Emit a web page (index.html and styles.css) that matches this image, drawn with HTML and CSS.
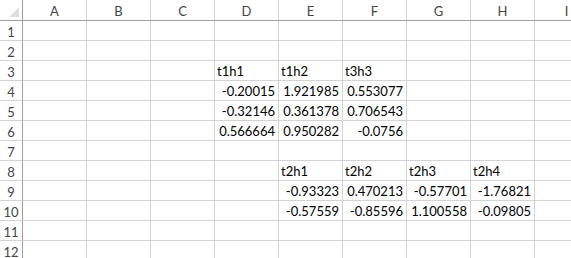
FILE: index.html
```html
<!DOCTYPE html>
<html>
<head>
<meta charset="utf-8">
<link rel="stylesheet" href="styles.css">
</head>
<body>
<div class="sheet">
  <div class="corner"><span class="tri"></span></div>
  <div class="ch">A</div><div class="ch">B</div><div class="ch">C</div><div class="ch">D</div><div class="ch">E</div><div class="ch">F</div><div class="ch">G</div><div class="ch">H</div><div class="ch">I</div>

  <div class="rh">1</div><div class="c"></div><div class="c"></div><div class="c"></div><div class="c"></div><div class="c"></div><div class="c"></div><div class="c"></div><div class="c"></div><div class="c"></div>
  <div class="rh">2</div><div class="c"></div><div class="c"></div><div class="c"></div><div class="c"></div><div class="c"></div><div class="c"></div><div class="c"></div><div class="c"></div><div class="c"></div>
  <div class="rh">3</div><div class="c"></div><div class="c"></div><div class="c"></div><div class="c t">t1h1</div><div class="c t">t1h2</div><div class="c t">t3h3</div><div class="c"></div><div class="c"></div><div class="c"></div>
  <div class="rh">4</div><div class="c"></div><div class="c"></div><div class="c"></div><div class="c n">-0.20015</div><div class="c n">1.921985</div><div class="c n">0.553077</div><div class="c"></div><div class="c"></div><div class="c"></div>
  <div class="rh">5</div><div class="c"></div><div class="c"></div><div class="c"></div><div class="c n">-0.32146</div><div class="c n">0.361378</div><div class="c n">0.706543</div><div class="c"></div><div class="c"></div><div class="c"></div>
  <div class="rh">6</div><div class="c"></div><div class="c"></div><div class="c"></div><div class="c n">0.566664</div><div class="c n">0.950282</div><div class="c n">-0.0756</div><div class="c"></div><div class="c"></div><div class="c"></div>
  <div class="rh">7</div><div class="c"></div><div class="c"></div><div class="c"></div><div class="c"></div><div class="c"></div><div class="c"></div><div class="c"></div><div class="c"></div><div class="c"></div>
  <div class="rh">8</div><div class="c"></div><div class="c"></div><div class="c"></div><div class="c"></div><div class="c t">t2h1</div><div class="c t">t2h2</div><div class="c t">t2h3</div><div class="c t">t2h4</div><div class="c"></div>
  <div class="rh">9</div><div class="c"></div><div class="c"></div><div class="c"></div><div class="c"></div><div class="c n">-0.93323</div><div class="c n">0.470213</div><div class="c n">-0.57701</div><div class="c n">-1.76821</div><div class="c"></div>
  <div class="rh">10</div><div class="c"></div><div class="c"></div><div class="c"></div><div class="c"></div><div class="c n">-0.57559</div><div class="c n">-0.85596</div><div class="c n">1.100558</div><div class="c n">-0.09805</div><div class="c"></div>
  <div class="rh">11</div><div class="c"></div><div class="c"></div><div class="c"></div><div class="c"></div><div class="c"></div><div class="c"></div><div class="c"></div><div class="c"></div><div class="c"></div>
  <div class="rh">12</div><div class="c"></div><div class="c"></div><div class="c"></div><div class="c"></div><div class="c"></div><div class="c"></div><div class="c"></div><div class="c"></div><div class="c"></div>
</div>
</body>
</html>
```
FILE: styles.css
```css
html, body {
  margin: 0;
  padding: 0;
  background: #ffffff;
  overflow: hidden;
}
body {
  width: 571px;
  height: 258px;
  font-family: Lato, "Open Sans", sans-serif;
  font-size: 13px;
  color: #000;
}
.sheet {
  display: grid;
  grid-template-columns: 23px repeat(9, 64px);
  grid-template-rows: 21px;
  grid-auto-rows: 20px;
  width: 599px;
}
.sheet > div {
  box-sizing: border-box;
  border-right: 1px solid #d4d4d4;
  border-bottom: 1px solid #d4d4d4;
  white-space: nowrap;
  overflow: hidden;
}
.corner {
  position: relative;
  border-right-color: #9e9e9e !important;
  border-bottom-color: #9e9e9e !important;
}
.tri {
  position: absolute;
  right: 3px;
  bottom: 3px;
  width: 0;
  height: 0;
  border-left: 10px solid transparent;
  border-bottom: 10px solid #dfdfdf;
}
.ch {
  border-bottom-color: #9e9e9e !important;
  display: flex;
  align-items: center;
  justify-content: center;
  color: #444;
  padding-top: 1px;
}
.rh {
  border-right-color: #9e9e9e !important;
  display: flex;
  align-items: center;
  justify-content: center;
  color: #444;
  padding-top: 2px;
}
.c {
  display: flex;
  align-items: flex-end;
  padding: 0 3px 1px 2px;
  line-height: 16px;
}
.t { justify-content: flex-start; }
.n { justify-content: flex-end; }
```
